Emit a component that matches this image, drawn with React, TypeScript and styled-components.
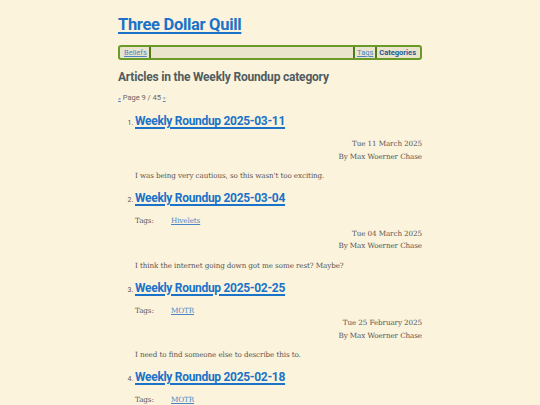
import React from "react";
import styled, { createGlobalStyle } from "styled-components";

const Global = createGlobalStyle`
  html, body { margin: 0; padding: 0; background: #fcf3dc; }
  body { font-family: "DejaVu Serif", serif; color: #555; }
`;

const Page = styled.div`
  width: 304px;
  margin: 0 auto;
  padding-top: 15px;
`;

const SiteTitle = styled.a`
  display: block;
  font-family: Roboto, "Open Sans", sans-serif;
  font-weight: 700;
  font-size: 16.5px;
  letter-spacing: -0.3px;
  line-height: 20px;
  color: #1a72c9;
  text-decoration: underline;
  text-decoration-thickness: 2px;
  text-underline-offset: 2px;
`;

const Nav = styled.nav`
  margin-top: 10px;
  display: flex;
  align-items: stretch;
  height: 11px;
  border: 2px solid #6a9b2a;
  border-radius: 3px;
  background: #ebe4cd;
  font-family: Roboto, sans-serif;
  font-size: 7.5px;
  line-height: 11px;
  padding: 0 2px;
`;

const NavLink = styled.a<{ $current?: boolean; $sepLeft?: boolean; $sepRight?: boolean }>`
  color: ${(p) => (p.$current ? "#245a94" : "#4a86c6")};
  font-weight: ${(p) => (p.$current ? 700 : 400)};
  text-decoration: ${(p) => (p.$current ? "none" : "underline")};
  padding: 0 2px;
  border-left: ${(p) => (p.$sepLeft ? "2px solid #4f7a1a" : "none")};
  border-right: ${(p) => (p.$sepRight ? "2px solid #4f7a1a" : "none")};
`;

const Spacer = styled.span`
  flex: 1;
`;

const Heading = styled.h2`
  margin: 9px 0 0;
  font-family: Roboto, sans-serif;
  font-weight: 700;
  font-size: 12px;
  letter-spacing: -0.2px;
  line-height: 16px;
  color: #505c60;
`;

const Pager = styled.p`
  margin: 8px 0 0;
  font-family: Roboto, sans-serif;
  font-size: 7.5px;
  line-height: 10px;
  color: #666;
  a { color: #4a86c6; font-size: 6px; }
`;

const List = styled.ol`
  margin: 7px 0 0;
  padding-left: 17px;
  li::marker { font-family: Roboto, sans-serif; font-size: 7px; color: #555; }
`;

const Item = styled.li`
  margin-bottom: 6px;
`;

const ItemTitle = styled.a`
  display: inline-block;
  font-family: Roboto, sans-serif;
  font-weight: 700;
  font-size: 12px;
  letter-spacing: -0.3px;
  line-height: 16px;
  color: #1a72c9;
  text-decoration: underline;
  text-decoration-thickness: 1.5px;
  text-underline-offset: 1.5px;
`;

const Meta = styled.div`
  margin-top: 9px;
  font-size: 7.2px;
  letter-spacing: -0.1px;
  line-height: 12.5px;
  color: #555;
`;

const TagRow = styled.div`
  display: flex;
`;

const TagLabel = styled.span`
  width: 36px;
`;

const TagLink = styled.a`
  color: #4a86c6;
  text-decoration: underline;
`;

const Right = styled.div`
  text-align: right;
`;

const Summary = styled.p`
  margin: 8px 0 0;
  font-size: 7.2px;
  letter-spacing: -0.1px;
  line-height: 10px;
  color: #555;
`;

type Art = { title: string; tag?: string; date: string; summary: string };

const arts: Art[] = [
  { title: "Weekly Roundup 2025-03-11", date: "Tue 11 March 2025", summary: "I was being very cautious, so this wasn't too exciting." },
  { title: "Weekly Roundup 2025-03-04", tag: "Hivelets", date: "Tue 04 March 2025", summary: "I think the internet going down got me some rest? Maybe?" },
  { title: "Weekly Roundup 2025-02-25", tag: "MOTR", date: "Tue 25 February 2025", summary: "I need to find someone else to describe this to." },
  { title: "Weekly Roundup 2025-02-18", tag: "MOTR", date: "Tue 18 February 2025", summary: "" },
];

export default function App() {
  return (
    <>
      <Global />
      <Page>
        <SiteTitle href="#">Three Dollar Quill</SiteTitle>
        <Nav>
          <NavLink href="#" $sepRight>Beliefs</NavLink>
          <Spacer />
          <NavLink href="#" $sepLeft $sepRight>Tags</NavLink>
          <NavLink href="#" $current>Categories</NavLink>
        </Nav>
        <Heading>Articles in the Weekly Roundup category</Heading>
        <Pager><a href="#">«</a> Page 9 / 45 <a href="#">»</a></Pager>
        <List>
          {arts.map((a) => (
            <Item key={a.title}>
              <ItemTitle href="#">{a.title}</ItemTitle>
              <Meta>
                {a.tag && (
                  <TagRow>
                    <TagLabel>Tags:</TagLabel>
                    <TagLink href="#">{a.tag}</TagLink>
                  </TagRow>
                )}
                <Right>{a.date}</Right>
                <Right>By Max Woerner Chase</Right>
              </Meta>
              {a.summary && <Summary>{a.summary}</Summary>}
            </Item>
          ))}
        </List>
      </Page>
    </>
  );
}
